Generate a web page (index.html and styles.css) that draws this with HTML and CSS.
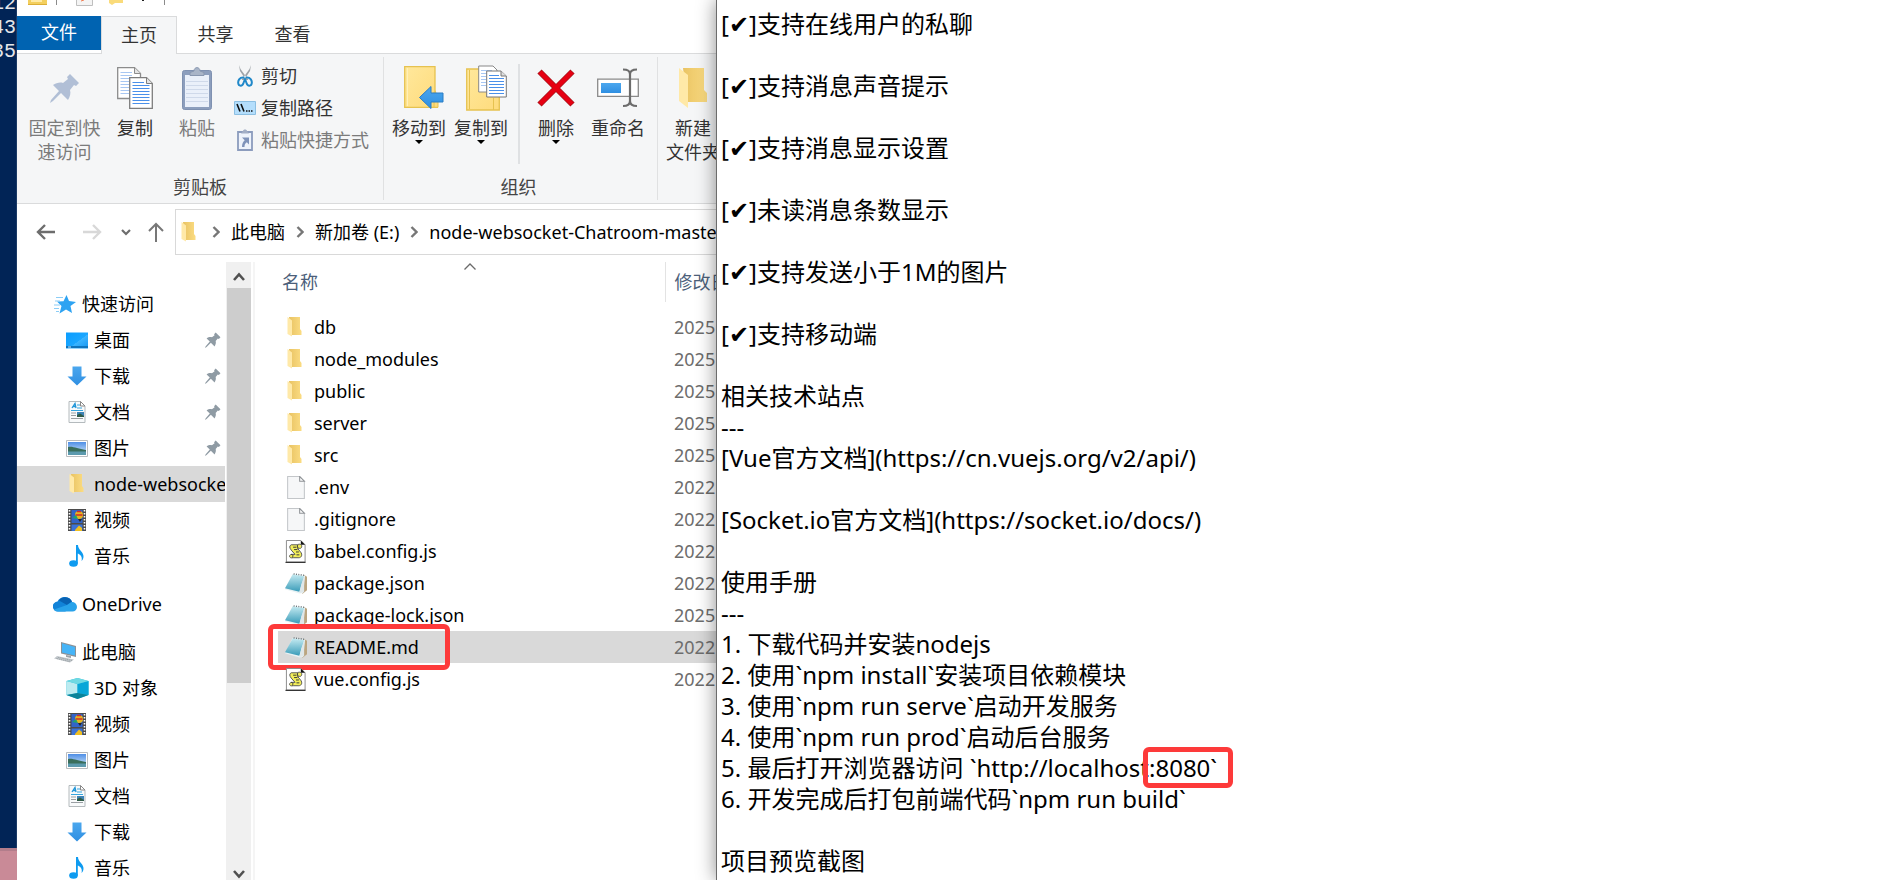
FILE: index.html
```html
<!DOCTYPE html>
<html lang="zh-CN">
<head>
<meta charset="utf-8">
<title>node-websocket-Chatroom-master</title>
<link rel="stylesheet" href="styles.css">
</head>
<body>
<svg class="defs" aria-hidden="true">
  <defs>
    <linearGradient id="g-folder" x1="0" x2="1" y1="0" y2="0"><stop offset="0" stop-color="#e9c363"/><stop offset="1" stop-color="#fbdc82"/></linearGradient>
    <linearGradient id="g-yellow" x1="0" x2="1" y1="0" y2="1"><stop offset="0" stop-color="#ffe89c"/><stop offset="1" stop-color="#fedb7c"/></linearGradient>
    <linearGradient id="g-blue" x1="0" x2="0" y1="0" y2="1"><stop offset="0" stop-color="#4ba7ee"/><stop offset="1" stop-color="#2f8fe2"/></linearGradient>
    <linearGradient id="g-desk" x1="0" x2="1" y1="0" y2="1"><stop offset="0" stop-color="#0a9dff"/><stop offset=".55" stop-color="#1ba6ff"/><stop offset=".56" stop-color="#3bb4ff"/><stop offset="1" stop-color="#1494f0"/></linearGradient>
    <linearGradient id="g-note" x1="0" x2="0" y1="0" y2="1"><stop offset="0" stop-color="#c4eaf1"/><stop offset="1" stop-color="#3a9cb9"/></linearGradient>
    <linearGradient id="g-sky" x1="0" x2="0" y1="0" y2="1"><stop offset="0" stop-color="#4f8fe6"/><stop offset="1" stop-color="#dff1fb"/></linearGradient>
  </defs>
  <symbol id="folder" viewBox="0 0 16 20"><path d="M2 0H13V12L14.5 14V18H3Z" fill="url(#g-folder)"/><path d="M.5 0L5 3.500V19.500L.5 17Z" fill="#ffe9a8"/></symbol>
  <symbol id="page" viewBox="0 0 18 22"><path d="M1 .5H12.500L17 5V21.500H1Z" fill="#f6f7f8" stroke="#c3c6c9"/><path d="M12.500.5V5H17Z" fill="#fff" stroke="#8f9397"/></symbol>
  <symbol id="script" viewBox="0 0 22 24"><path d="M1 .5H16L20.500 5V23H1Z" fill="#fff" stroke="#8a8a8a"/><path d="M16 .5V5H20.500Z" fill="#111"/><path d="M0 23.300H21" stroke="#111"/><path d="M6 5H13C13 4 17 4 17 6.500 17 9 15 9 13.500 8.500H12.500L16.500 13.500C18 17 15.500 18.500 14 18.500H8C4 19.500 3 16 6 15H10L6 10.500C4 8 4 6 6 5Z" fill="#f2ee5a" stroke="#555"/><path d="M13 5C12 6.500 12.500 8.500 13.500 8.500M6 15C8 15 8.500 17.500 7 18M8 7.500H11.500M9 10H12.500M11 12.500H14M11.500 15.500H14.500" fill="none" stroke="#333"/></symbol>
  <symbol id="note" viewBox="0 0 23 22"><path d="M20 2L23 4V18L18 22Z" fill="#bba580"/><path d="M8 1L21 3 19 21 15 21.500 0 17Z" fill="#e9f2f4"/><path d="M8 1.500L20 3.500 15 19.500 0 16Z" fill="url(#g-note)"/><path d="M17 12L20 4 20 20 15 21Z" fill="#dfe7e9"/><path d="M9 1L21 2.500" stroke="#5f6d72" stroke-dasharray="1 1.500" stroke-width="1.500"/></symbol>
  <symbol id="pin" viewBox="0 0 30 30"><path d="M20 1L29 10 26 13 24 12 20 17C21 20 20 24 18 27L11 20 3 28 0 30 1 27 9 18 3 12C6 10 10 9 13 10L18 6 17 4Z" fill="currentColor"/></symbol>
  <symbol id="star" viewBox="0 0 22 19"><path d="M12.500 0L15 6 22 7 16.500 11 18 18 12 14.500 5.500 18.500 7.500 11 3 6.500 9.500 6.200Z" fill="#2ea3f2"/><path d="M2 2.500H9M1 6H6M0 10H6M0 13.500H5M2 16.500H5" stroke="#8ccdf6" stroke-width="1"/></symbol>
  <symbol id="desk" viewBox="0 0 22 16"><path d="M0 0H22V16H0Z" fill="url(#g-desk)"/><path d="M0 14.500H22" stroke="#0e74bd" stroke-width="2"/><path d="M2 14.500H5" stroke="#fff" stroke-width=".8"/></symbol>
  <symbol id="down" viewBox="0 0 20 20"><path d="M5.500.5H14.500V10.500H19.500L10 19.500.5 10.500H5.500Z" fill="url(#g-blue)"/></symbol>
  <symbol id="doc" viewBox="0 0 18 22"><path d="M1 .5H12.500L17 5V21.500H1Z" fill="#f8fafb" stroke="#b4babd"/><path d="M12.500.5V5H17Z" fill="#fff" stroke="#888"/><path d="M4 7L7 2.500 8 7M5 5.500H8" fill="none" stroke="#1e95d8" stroke-width="1.300"/><path d="M9 4H12M9 7H14M3 9.500H15" stroke="#35a5df"/><path d="M3 12H8M3 14.500H8M3 17.500H15" stroke="#9a9fa3"/><path d="M9 11H16V16H9Z" fill="#3d83b5"/><path d="M9 14L12 12.500 16 15V16H9Z" fill="#315b47"/></symbol>
  <symbol id="pic" viewBox="0 0 22 17"><path d="M.5.5H21.500V16.500H.5Z" fill="#fff" stroke="#b9bcbf"/><path d="M2 2H20V15H2Z" fill="url(#g-sky)"/><path d="M2 7C7 6 12 9 20 10V12H2Z" fill="#396e5c"/><path d="M2 11.500H20V15H2Z" fill="#5c9aae"/></symbol>
  <symbol id="film" viewBox="0 0 18 22"><path d="M0 0H18V22H0Z" fill="#4b4b4b"/><path d="M1.500 1V22M16.500 1V22" stroke="#fff" stroke-width="1.600" stroke-dasharray="1.500 1.500"/><path d="M3.500 1H14.500V14H3.500Z" fill="#3264c8"/><path d="M3.500 15.500H14.500V22H3.500Z" fill="#3b73d8"/><circle cx="11" cy="6" r="4" fill="#e7b51e"/><path d="M9 2.500H13M7.500 6H14.500" stroke="#cf2d2d" stroke-width="1.600"/><path d="M4 9L8 6 10 10Z" fill="#22a36a"/><path d="M10 10L12 13 14 10Z" fill="#262626"/><path d="M7 21L11 16.500 14 19V22H7Z" fill="#f0bf21"/></symbol>
  <symbol id="music" viewBox="0 0 16 22"><ellipse cx="4.500" cy="18.500" rx="4.300" ry="3.200" fill="#0e9bf0"/><path d="M7 0H9C9 5 15 7 14.500 12 14.300 14 13.500 15 12.500 16 14 11 10 9 8.800 8.500V18.500H7Z" fill="#0e9bf0"/></symbol>
  <symbol id="cloud" viewBox="0 0 24 16"><path d="M5 15.500A5 5 0 0 1 4.500 5.500 8 8 0 0 1 18 4L22 12 12 15.500Z" fill="#1183d8"/><path d="M6 4.500A7.500 7.500 0 0 1 19 5.500L14 9Z" fill="#0862b3"/><path d="M14 9L18.500 6A5 5 0 0 1 24 11 4.500 4.500 0 0 1 19.500 15.500H5C3 15.500 1.500 14.500 1 13.500Z" fill="#28a2ea"/></symbol>
  <symbol id="pc" viewBox="0 0 23 21"><path d="M7 0L22 4V15L7 11.500Z" fill="#8a9197"/><path d="M8 1.200L21 5V13.500L8 10.500Z" fill="#46b4f7"/><path d="M12 13L17 14V16L12 15Z" fill="#9da3a8"/><path d="M3 14L20 17.500 16 20.500 0 16.500Z" fill="#c2c8cc"/><path d="M4 15.300L18 18.500M2.500 16.500L16 19.700" stroke="#8e959a" stroke-width=".7" stroke-dasharray="1.500 .7"/></symbol>
  <symbol id="cube" viewBox="0 0 22 21"><path d="M0 3L11 0 22 3V17L11 21 0 17Z" fill="#2abddb"/><path d="M0 3L11 6V15L0 17Z" fill="#bcebf0"/><path d="M11 6L22 3V17L11 15Z" fill="#08a6d8"/><path d="M0 3L11 0 22 3 11 6Z" fill="#6fd9e2"/><path d="M0 17L11 15 22 17 11 21Z" fill="#0b8399"/></symbol>
  <symbol id="sheets" viewBox="0 0 36 42"><path d="M.7.7H17.500L23.500 6.500V31.500H.7Z" fill="#fff" stroke="#8c8c8c" stroke-width="1.300"/><path d="M17.500.7V6.500H23.500" fill="#e4e4e4" stroke="#8c8c8c"/><path d="M3.500 5.500H15M3.500 8.500H15M3.500 11.500H20M3.500 14.500H12M3.500 17.500H12M3.500 20.500H12M3.500 23.500H12M3.500 26.500H12" stroke="#a8c7f2"/><path d="M12.700 10.700H29.500L35.300 16.500V41.300H12.700Z" fill="#fff" stroke="#7d7d7d" stroke-width="1.300"/><path d="M29.500 10.700V16.500H35.300" fill="#e4e4e4" stroke="#7d7d7d"/><path d="M15.500 15.500H27M15.500 18.500H32.500M15.500 21.500H32.500M15.500 24.500H32.500M15.500 27.500H32.500M15.500 30.500H32.500M15.500 33.500H32.500M15.500 36.500H32.500" stroke="#4a90ea"/></symbol>
  <symbol id="board" viewBox="0 0 30 43"><rect x=".5" y="3.500" width="29" height="39" rx="2" fill="#8c9ebd" stroke="#7f91b1"/><path d="M3 8H27V40H3Z" fill="#eaf0fa"/><path d="M4 14.500H26M4 18.500H26M4 22.500H26M4 26.500H26M4 30.500H26M4 34.500H26" stroke="#cfd9ea"/><path d="M8 8.500V5.500L12 4C12-.5 18-.5 18 4L22 5.500V8.500Z" fill="#a9b5c8" stroke="#8897b0"/></symbol>
  <symbol id="cut" viewBox="0 0 16 22"><path d="M2 0L3.500 4 11.500 15 9 15 3 6ZM14 0L12.500 4 4.500 15 7 15 13 6Z" fill="#9ea3a8"/><path d="M7 12.500C2 12 1 16 1.200 18 1.500 21.500 5.500 21.500 6.500 18L8 14 9.500 18C10.500 21.500 14.500 21.500 14.800 18 15 16 14 12 9 12.500" fill="none" stroke="#2088c9" stroke-width="2"/></symbol>
  <symbol id="path" viewBox="0 0 22 14"><path d="M.5.5H21.500V13.500H.5Z" fill="#b4defc" stroke="#8cbfe2"/><path d="M3 3L6 10.500M7 3L10 10.500" stroke="#111" stroke-width="1.600"/><path d="M12 10H18.500" stroke="#111" stroke-width="1.500" stroke-dasharray="1.500 1"/></symbol>
  <symbol id="shortcut" viewBox="0 0 16 22"><path d="M1 3H15V21H1Z" fill="#eef3fb" stroke="#8c9cbd" stroke-width="1.800"/><path d="M4 4.500L6 2C6 0 10 0 10 2L12 4.500Z" fill="#a2aec5"/><path d="M5 8.500H12V15.500L9.800 13.300C8 14.500 7.500 16 7.500 18H5C5 14.500 6 12.800 7.700 11.200Z" fill="#7f93ba"/></symbol>
  <symbol id="moveto" viewBox="0 0 40 44"><path d="M31 31V24L34 30V42H31Z" fill="#e9bf54"/><path d="M.7.7H31V41.300H.7Z" fill="url(#g-yellow)" stroke="#e6c250" stroke-width="1.300"/><path d="M3.500 2V40" stroke="#fff0b8"/><path d="M30 26L34 29V41.300H30Z" fill="#fedb7c" stroke="#e6c250"/><path d="M15.500 31.500L27 20.500V27H39V36H27V42.500Z" fill="url(#g-blue)" stroke="#2a7cc4"/></symbol>
  <symbol id="copyto" viewBox="0 0 41 46"><path d="M.7 4H28L33.300 30V45H.7Z" fill="url(#g-yellow)" stroke="#e6c250" stroke-width="1.300"/><path d="M3.500 5V44M27.500 33V45" stroke="#e6c250"/><path d="M12.700 1H27L31 5V27H12.700Z" fill="#fff" stroke="#888"/><path d="M15 5.500H26M15 8.500H26M15 11.500H20M15 14.500H20M15 17.500H20M15 20.500H20" stroke="#a8c7f2"/><path d="M20.700 6H35L40.300 11V32H20.700Z" fill="#fff" stroke="#777"/><path d="M35 6V11H40.300" fill="#ddd" stroke="#777"/><path d="M23 10.500H33M23 13.500H38M23 16.500H38M23 19.500H38M23 22.500H38M23 25.500H38M23 28.500H38" stroke="#4a90ea"/></symbol>
  <symbol id="delete" viewBox="0 0 38 38"><path d="M2.500 2.500L35.500 35.500M35.500 2.500L2.500 35.500" stroke="#a8141c" stroke-width="6"/><path d="M3 3L35 35M35 3L3 35" stroke="#e60012" stroke-width="4.500"/></symbol>
  <symbol id="rename" viewBox="0 0 42 40"><path d="M.7 11.200H41.300V28.300H.7Z" fill="#fff" stroke="#8a8a8a" stroke-width="1.300"/><path d="M4 15H24V25H4Z" fill="url(#g-blue)"/><path d="M26 1.500C30 1.500 33 3 33 6 33 3 36 1.500 40 1.500M33 5V34M26 38C30 38 33 36.500 33 33 33 36.500 36 38 40 38" fill="none" stroke="#6c6c6c" stroke-width="2.200"/></symbol>
  <symbol id="newfolder" viewBox="0 0 29 41"><path d="M4 0H25V22L28 25V34H8Z" fill="url(#g-folder)"/><path d="M0 0L9 7V40L0 33Z" fill="#ffe9a8"/></symbol>
  <symbol id="chev" viewBox="0 0 8 12"><path d="M1.500 1L6.500 6 1.500 11" fill="none" stroke="#767676" stroke-width="2.400"/></symbol>
</svg>

<div class="desktop">
  <div class="terminal"><pre class="console">12
43
35</pre></div>

  <main class="explorer">
    <div class="titlebar">
      <svg class="tb-a" viewBox="0 0 19 5"><path d="M0 0H19V4.500H0Z" fill="#f3cf5e"/><path d="M3 0H14V2H3Z" fill="#ffeaa5"/><path d="M0 4.500H19" stroke="#dcae36"/></svg>
      <span class="tb-sep"></span>
      <svg class="tb-b" viewBox="0 0 17 6"><path d="M.5-1V5.500H16.500V-1Z" fill="#f4f4f4" stroke="#bfbfbf"/><path d="M5 1L8 0" stroke="#f07b50"/></svg>
      <svg class="tb-c" viewBox="0 0 15 5"><path d="M0 0H14V3H6L3 5 0 3Z" fill="#fadb7a"/></svg>
      <span class="tb-dot"></span>
      <span class="tb-sep tb-last"></span>
    </div>
    <div class="tabs" role="tablist">
      <button class="tab file" role="tab">文件</button>
      <button class="tab current" role="tab" aria-selected="true">主页</button>
      <button class="tab" role="tab">共享</button>
      <button class="tab" role="tab">查看</button>
    </div>

    <div class="ribbon">
      <section class="group clip">
        <div class="tools">
          <button class="tool wide off"><svg class="i-pin"><use href="#pin"/></svg><span>固定到快<br>速访问</span></button>
          <button class="tool"><svg class="i-sheets"><use href="#sheets"/></svg><span>复制</span></button>
          <button class="tool off"><svg class="i-board"><use href="#board"/></svg><span>粘贴</span></button>
          <div class="stack">
            <button class="mini"><svg class="i-cut"><use href="#cut"/></svg><span>剪切</span></button>
            <button class="mini"><svg class="i-path"><use href="#path"/></svg><span>复制路径</span></button>
            <button class="mini off"><svg class="i-cut"><use href="#shortcut"/></svg><span>粘贴快捷方式</span></button>
          </div>
        </div>
        <h2>剪贴板</h2>
      </section>
      <section class="group organize">
        <div class="tools">
          <button class="tool"><svg class="i-move"><use href="#moveto"/></svg><span>移动到</span><i class="drop"></i></button>
          <button class="tool"><svg class="i-copy"><use href="#copyto"/></svg><span>复制到</span><i class="drop"></i></button>
          <span class="rule"></span>
          <button class="tool"><svg class="i-del"><use href="#delete"/></svg><span>删除</span><i class="drop"></i></button>
          <button class="tool"><svg class="i-ren"><use href="#rename"/></svg><span>重命名</span></button>
        </div>
        <h2>组织</h2>
      </section>
      <section class="group create">
        <div class="tools">
          <button class="tool"><svg class="i-new"><use href="#newfolder"/></svg><span>新建<br>文件夹</span></button>
        </div>
      </section>
    </div>

    <div class="navbar">
      <div class="arrows">
        <button aria-label="后退"><svg class="i-arrow" viewBox="0 0 20 16"><path d="M19 8H2M9 1L2 8 9 15" fill="none" stroke="#6d6d6d" stroke-width="2.400"/></svg></button>
        <button aria-label="前进"><svg class="i-arrow" viewBox="0 0 20 16"><path d="M1 8H18M11 1L18 8 11 15" fill="none" stroke="#d8d8d8" stroke-width="2.400"/></svg></button>
        <button aria-label="最近"><svg class="i-small" viewBox="0 0 10 7"><path d="M1 1L5 5 9 1" fill="none" stroke="#6d6d6d" stroke-width="2.200"/></svg></button>
        <button aria-label="向上"><svg class="i-up" viewBox="0 0 16 20"><path d="M8 20V2M1 9L8 2 15 9" fill="none" stroke="#777" stroke-width="2"/></svg></button>
      </div>
      <div class="address">
        <svg class="i-folder"><use href="#folder"/></svg>
        <svg class="i-chev"><use href="#chev"/></svg><a href="#pc">此电脑</a>
        <svg class="i-chev"><use href="#chev"/></svg><a href="#e">新加卷 (E:)</a>
        <svg class="i-chev"><use href="#chev"/></svg><a href="#n">node-websocket-Chatroom-master</a>
      </div>
    </div>

    <div class="panes">
      <nav class="tree">
        <a class="root" href="#q"><span class="ico"><svg class="i-star"><use href="#star"/></svg></span>快速访问</a>
        <a href="#t1"><span class="ico"><svg class="i-desk"><use href="#desk"/></svg></span>桌面<svg class="i-tack"><use href="#pin"/></svg></a>
        <a href="#t2"><span class="ico"><svg class="i-down"><use href="#down"/></svg></span>下载<svg class="i-tack"><use href="#pin"/></svg></a>
        <a href="#t3"><span class="ico"><svg class="i-doc"><use href="#doc"/></svg></span>文档<svg class="i-tack"><use href="#pin"/></svg></a>
        <a href="#t4"><span class="ico"><svg class="i-desk"><use href="#pic"/></svg></span>图片<svg class="i-tack"><use href="#pin"/></svg></a>
        <a class="active" href="#t5"><span class="ico"><svg class="i-folder"><use href="#folder"/></svg></span>node-websocket</a>
        <a href="#t6"><span class="ico"><svg class="i-doc"><use href="#film"/></svg></span>视频</a>
        <a href="#t7"><span class="ico"><svg class="i-music"><use href="#music"/></svg></span>音乐</a>
        <a class="root spaced" href="#od"><span class="ico"><svg class="i-cloud"><use href="#cloud"/></svg></span>OneDrive</a>
        <a class="root spaced" href="#pc"><span class="ico"><svg class="i-pc"><use href="#pc"/></svg></span>此电脑</a>
        <a href="#p1"><span class="ico"><svg class="i-pc"><use href="#cube"/></svg></span>3D 对象</a>
        <a href="#p2"><span class="ico"><svg class="i-doc"><use href="#film"/></svg></span>视频</a>
        <a href="#p3"><span class="ico"><svg class="i-desk"><use href="#pic"/></svg></span>图片</a>
        <a href="#p4"><span class="ico"><svg class="i-doc"><use href="#doc"/></svg></span>文档</a>
        <a href="#p5"><span class="ico"><svg class="i-down"><use href="#down"/></svg></span>下载</a>
        <a href="#p6"><span class="ico"><svg class="i-music"><use href="#music"/></svg></span>音乐</a>
      </nav>
      <div class="scroll">
        <svg class="i-scroll" viewBox="0 0 12 9"><path d="M1 8L6 2.500 11 8" fill="none" stroke="#505050" stroke-width="2.600"/></svg>
        <div class="thumb"></div>
        <svg class="i-scroll" viewBox="0 0 12 9"><path d="M1 1L6 6.500 11 1" fill="none" stroke="#505050" stroke-width="2.600"/></svg>
      </div>
      <div class="files">
        <table>
          <thead><tr><th class="name">名称<svg class="i-sort" viewBox="0 0 12 7"><path d="M.5 6.500L6 1 11.500 6.500" fill="none" stroke="#6a6a6a" stroke-width="1.300"/></svg></th><th class="date">修改日期</th></tr></thead>
          <tbody>
            <tr><td><div><svg class="i-folder"><use href="#folder"/></svg>db</div></td><td>2025</td></tr>
            <tr><td><div><svg class="i-folder"><use href="#folder"/></svg>node_modules</div></td><td>2025</td></tr>
            <tr><td><div><svg class="i-folder"><use href="#folder"/></svg>public</div></td><td>2025</td></tr>
            <tr><td><div><svg class="i-folder"><use href="#folder"/></svg>server</div></td><td>2025</td></tr>
            <tr><td><div><svg class="i-folder"><use href="#folder"/></svg>src</div></td><td>2025</td></tr>
            <tr><td><div><svg class="i-file"><use href="#page"/></svg>.env</div></td><td>2022</td></tr>
            <tr><td><div><svg class="i-file"><use href="#page"/></svg>.gitignore</div></td><td>2022</td></tr>
            <tr><td><div><svg class="i-file"><use href="#script"/></svg>babel.config.js</div></td><td>2022</td></tr>
            <tr><td><div><svg class="i-file"><use href="#note"/></svg>package.json</div></td><td>2022</td></tr>
            <tr><td><div><svg class="i-file"><use href="#note"/></svg>package-lock.json</div></td><td>2025</td></tr>
            <tr class="picked"><td><div><svg class="i-file"><use href="#note"/></svg>README.md<span class="mark mark-file"></span></div></td><td>2022</td></tr>
            <tr><td><div><svg class="i-file"><use href="#script"/></svg>vue.config.js</div></td><td>2022</td></tr>
          </tbody>
        </table>
      </div>
    </div>
  </main>

  <section class="notepad">
    <textarea aria-label="README.md" spellcheck="false" wrap="off">[✔]支持在线用户的私聊

[✔]支持消息声音提示

[✔]支持消息显示设置

[✔]未读消息条数显示

[✔]支持发送小于1M的图片

[✔]支持移动端

相关技术站点
---
[Vue官方文档](https://cn.vuejs.org/v2/api/)

[Socket.io官方文档](https://socket.io/docs/)

使用手册
---
1. 下载代码并安装nodejs
2. 使用`npm install`安装项目依赖模块
3. 使用`npm run serve`启动开发服务
4. 使用`npm run prod`启动后台服务
5. 最后打开浏览器访问 `http://localhost:8080`
6. 开发完成后打包前端代码`npm run build`

项目预览截图</textarea>
    <span class="mark mark-port"></span>
  </section>
</div>
</body>
</html>
```
FILE: styles.css
```css
*, *::before, *::after { box-sizing: border-box; }

body {
  margin: 0;
  height: 100vh;
  overflow: hidden;
  font: 18px/24px "Noto Sans", "Noto Sans CJK SC", sans-serif;
  color: #000;
}

svg { display: block; flex: none; }
.defs { position: absolute; width: 0; height: 0; }
a { color: inherit; text-decoration: none; }
button { border: 0; padding: 0; background: none; font: inherit; color: inherit; }

.desktop {
  display: grid;
  grid-template-columns: 17px minmax(0, 699fr) minmax(0, 1169fr);
  grid-template-rows: minmax(0, 1fr);
  height: 100%;
}

/* Console strip */
.terminal {
  display: flex;
  flex-direction: column;
  background: #c98a97;
  overflow: hidden;
}
.terminal::after { content: ""; height: 32px; flex: none; border-top: 3px solid #b27d8b; }
.console {
  flex: 1;
  display: flex;
  justify-content: flex-end;
  align-items: flex-start;
  margin: -8px 0 0;
  background: #012456;
  color: #e4e6ea;
  font: 20px/24px "Liberation Mono", monospace;
  border-right: 1px solid #1b3a66;
}

/* Explorer */
.explorer {
  display: flex;
  flex-direction: column;
  min-width: 0;
  overflow: hidden;
  background: #fff;
  white-space: nowrap;
}
.titlebar { display: flex; align-items: flex-start; height: 16px; padding-left: 11px; }
.tb-a { width: 19px; height: 5px; }
.tb-sep { width: 1px; height: 5px; margin: 0 19px 0 9px; background: #8b8b8b; }
.tb-b { width: 17px; height: 6px; margin-right: 16px; }
.tb-c { width: 15px; height: 5px; }
.tb-dot { width: 2px; height: 1px; margin-left: 18px; background: #222; }
.tb-last { margin: 0 0 0 20px; }

.tabs { display: flex; height: 37px; }
.tab { width: 77px; padding-bottom: 2px; color: #333; }
.tab.file { width: 84px; height: 34px; background: #0063b1; color: #fff; }
.tab.current {
  z-index: 1;
  width: 76px;
  height: 38px;
  background: #f5f6f7;
  border: 1px solid #dadbdc;
  border-bottom: 0;
}

.ribbon {
  display: flex;
  height: 151px;
  background: #f5f6f7;
  border-top: 1px solid #dadbdc;
  border-bottom: 1px solid #dadbdc;
  color: #333;
}
.group { display: flex; flex-direction: column; flex: none; margin: 3px 0; padding-top: 7px; border-right: 1px solid #e0e1e2; }
.clip { width: 367px; }
.organize { width: 274px; }
.create { border: 0; }
.group h2 { margin: auto 0 1px; font-size: 18px; line-height: 24px; font-weight: 400; text-align: center; color: #444; }
.organize h2 { padding-right: 4px; }
.tools { display: flex; align-items: flex-start; }
.clip .tools { padding-left: 8px; }
.organize .tools { padding-left: 4px; }
.create .tools { padding-left: 4px; }
.tool { display: grid; justify-items: center; grid-template-rows: 48px auto; width: 62px; }
.tool.wide { width: 79px; }
.tool svg { align-self: center; }
.tool span { padding-top: 4px; }
.off { color: #7b7b7b; }
.off .i-pin { color: #b1bfd6; }
.drop { border: 4px solid transparent; border-top-color: #000; border-bottom: 0; }
.rule { width: 2px; height: 100px; margin: 0 5px 0 6px; background: #dfe1e3; }
.stack { display: grid; gap: 8px; padding-left: 6px; }
.mini { display: grid; grid-template-columns: 22px auto; justify-items: center; align-items: center; column-gap: 5px; }
.mini span { justify-self: start; }

.i-pin { width: 30px; height: 30px; }
.i-sheets { width: 36px; height: 42px; }
.i-board { width: 30px; height: 43px; }
.i-cut { width: 16px; height: 22px; }
.i-path { width: 22px; height: 14px; }
.i-move { width: 40px; height: 44px; margin-left: 10px; }
.i-copy { width: 41px; height: 46px; margin-left: 10px; }
.i-del { width: 38px; height: 38px; }
.i-ren { width: 42px; height: 40px; }
.i-new { width: 29px; height: 41px; }

.navbar { display: flex; align-items: flex-end; height: 51px; }
.arrows { display: flex; align-items: center; width: 158px; height: 46px; padding-left: 19px; }
.i-arrow { width: 20px; height: 16px; margin-right: 26px; }
.i-small { width: 10px; height: 7px; margin: 0 17px 0 -7px; }
.i-up { width: 16px; height: 20px; }
.address {
  flex: 1;
  display: flex;
  align-items: center;
  min-width: 0;
  height: 46px;
  padding-left: 5px;
  border: 1px solid #d9d9d9;
  border-right: 0;
}
.i-chev { width: 8px; height: 12px; margin: 0 11px; }
.address .i-folder + .i-chev { margin-left: 15px; }
.i-folder { width: 16px; height: 20px; }

.panes { display: flex; flex: 1; min-height: 0; padding-top: 7px; }
.tree { width: 208px; margin-right: 1px; padding-top: 24px; overflow: hidden; flex: none; }
.tree a { display: flex; align-items: center; height: 36px; padding-left: 48px; white-space: pre; }
.tree a.root { padding-left: 36px; }
.tree a.spaced { margin-top: 12px; }
.tree a.active { background: #d9d9d9; }
.ico { display: grid; place-items: center; flex: none; width: 24px; margin-right: 5px; }
.i-star { width: 22px; height: 19px; }
.i-desk { width: 22px; height: 17px; }
.i-down { width: 20px; height: 20px; }
.i-doc { width: 18px; height: 22px; }
.i-music { width: 16px; height: 22px; }
.i-cloud { width: 24px; height: 16px; }
.i-pc { width: 23px; height: 21px; }
.i-tack { width: 16px; height: 16px; margin: 0 4px 0 auto; color: #8f9ba4; }

.scroll {
  display: flex;
  flex-direction: column;
  align-items: center;
  flex: none;
  width: 25px;
  padding: 10px 0 1px;
  background: #f0f0f0;
}
.thumb { width: 24px; height: 65%; margin: 7px 0 auto; background: #cdcdcd; }
.i-scroll { width: 12px; height: 9px; }

.files { flex: 1; min-width: 0; margin-left: 2px; padding-left: 23px; border-left: 2px solid #f5f5f5; }
.files table { width: 100%; border-collapse: collapse; table-layout: fixed; }
.files th { position: relative; height: 40px; padding: 0; font-weight: 400; text-align: left; color: #4c607a; }
.files th.name { padding-left: 4px; border-right: 1px solid #e3e3e3; }
.files th.date { width: 51px; padding-left: 9px; }
.i-sort { position: absolute; top: 1px; left: 48%; width: 12px; height: 7px; }
.files thead::after { content: ""; display: block; height: 9px; }
.files td { height: 32px; padding: 0; }
.files td + td { padding-left: 9px; color: #6d6d6d; }
.files td div { position: relative; display: flex; align-items: center; margin-left: -1px; }
.files td svg { margin: 0 7px 0 8px; }
.files td .i-folder { margin: 0 11px 0 10px; }
.i-file { width: 22px; height: 23px; }
.picked { background: #d9d9d9; }

/* Text editor */
.notepad {
  position: relative;
  z-index: 2;
  background: #fff;
  border-left: 1px solid #6c6c6c;
  box-shadow: 0 0 18px rgba(0, 0, 0, .45);
}
.notepad textarea {
  display: block;
  width: 100%;
  height: 100%;
  padding: 8px 4px 0;
  border: 0;
  outline: 0;
  resize: none;
  overflow: hidden;
  background: none;
  color: #000;
  font: 24px/31px "Noto Sans", "Noto Sans CJK SC", "DejaVu Sans", sans-serif;
}

.mark { position: absolute; border: 5px solid #fd3a3a; border-radius: 6px; pointer-events: none; }
.mark-file { top: -11px; left: -9px; width: 182px; height: 46px; }
.mark-port { top: 747px; left: 426px; width: 90px; height: 41px; }
```
